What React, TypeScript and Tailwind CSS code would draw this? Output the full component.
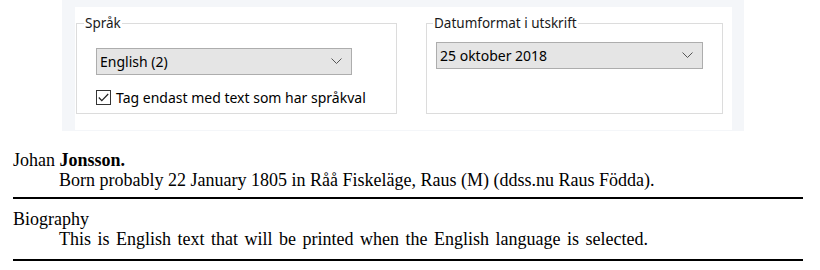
import React from "react";

const ui = { fontFamily: '"Noto Sans", "Open Sans", sans-serif' };
const serif = { fontFamily: '"Liberation Serif", "Times New Roman", serif' };

function Chevron() {
  return (
    <svg width="11" height="7" viewBox="0 0 11 7" className="shrink-0">
      <path d="M0.5 0.5 L5.5 5.5 L10.5 0.5" fill="none" stroke="#555" strokeWidth="1" />
    </svg>
  );
}

function Select({ value, width }: { value: string; width: number }) {
  return (
    <div
      className="flex h-[27px] items-center justify-between border border-[#adadad] bg-[#e5e5e5] pl-[3px] pr-[9px] text-[14px] text-black"
      style={{ width }}
    >
      <span>{value}</span>
      <Chevron />
    </div>
  );
}

export default function App() {
  return (
    <div className="h-[270px] w-[820px] overflow-hidden bg-white">
      <div className="flex h-[131px] w-[820px]">
        <div className="w-[62px]" />
        <div className="flex h-[131px] w-[682px] flex-col bg-[#f4f6f9] pt-[7px] pl-[13px]">
          <div className="flex h-[123px] w-[657px] gap-[29px] bg-white pl-px pt-[7px]" style={ui}>
            <fieldset className="h-[100px] w-[321px] border border-[#dcdcdc] px-[19px]">
              <legend className="ml-[-12px] px-px text-[13.5px] leading-[18px] text-[#1a1a1a]">Språk</legend>
              <div className="mt-[16px]">
                <Select value="English (2)" width={256} />
              </div>
              <div className="mt-[12px] flex items-center gap-[5px] text-[14px] text-black">
                <div className="flex h-[15px] w-[15px] items-center justify-center border border-[#333] bg-white">
                  <svg width="11" height="9" viewBox="0 0 11 9">
                    <path d="M0.8 4.5 L3.8 7.6 L10.2 1" fill="none" stroke="#222" strokeWidth="1.2" />
                  </svg>
                </div>
                <span>Tag endast med text som har språkval</span>
              </div>
            </fieldset>
            <fieldset className="h-[100px] w-[297px] border border-[#dcdcdc] px-[9px]">
              <legend className="ml-[-3px] px-px text-[13.5px] leading-[18px] text-[#1a1a1a]">Datumformat i utskrift</legend>
              <div className="mt-[10px]">
                <Select value="25 oktober 2018" width={267} />
              </div>
            </fieldset>
          </div>
        </div>
      </div>
      <div className="pl-[13px] text-[18px] leading-[20px] text-black" style={serif}>
        <div className="w-[790px] pt-[19px]">
          <div>
            Johan <b>Jonsson.</b>
          </div>
          <div className="pl-[46px]">
            Born probably 22 January 1805 in Råå Fiskeläge, Raus (M) (ddss.nu Raus Födda).
          </div>
          <div className="mt-[7px] h-[2px] bg-black" />
          <div className="mt-[10px]">Biography</div>
          <div className="pl-[46px] [word-spacing:2px]">
            This is English text that will be printed when the English language is selected.
          </div>
          <div className="mt-[10px] h-[2px] bg-black" />
        </div>
      </div>
    </div>
  );
}
